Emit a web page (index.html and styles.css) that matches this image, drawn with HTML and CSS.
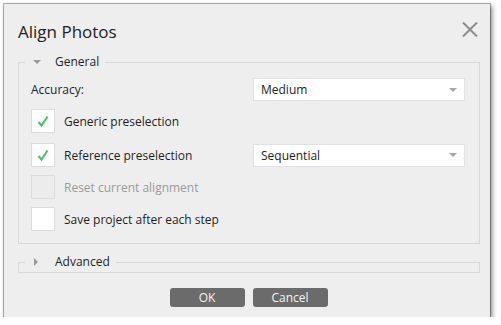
FILE: index.html
```html
<!DOCTYPE html>
<html lang="en">

<head>
  <meta charset="UTF-8" />
  <title>Align Photos</title>
  <link rel="stylesheet" href="styles.css">
</head>

<body>
  <div class="dialog">
    <div class="titlebar">
      <span class="title">Align Photos</span>
      <svg class="close" width="16" height="15" viewBox="0 0 16 15">
        <path d="M1 0.5 L15 14.5 M15 0.5 L1 14.5" stroke="#8c8c8c" stroke-width="2" fill="none" />
      </svg>
    </div>

    <fieldset class="group">
      <legend><span class="arrow-down"></span>General</legend>

      <div class="row row-accuracy">
        <span class="label">Accuracy:</span>
        <div class="combo"><span>Medium</span><span class="combo-arrow"></span></div>
      </div>

      <div class="row row-check gap1">
        <span class="check checked">
          <svg width="14" height="14" viewBox="0 0 14 14"><path d="M2.5 8 L5.5 11.5 L11.5 2.5" stroke="#3fc56a" stroke-width="2" fill="none" /></svg>
        </span>
        <span class="label">Generic preselection</span>
      </div>

      <div class="row row-check gap2">
        <span class="check checked">
          <svg width="14" height="14" viewBox="0 0 14 14"><path d="M2.5 8 L5.5 11.5 L11.5 2.5" stroke="#3fc56a" stroke-width="2" fill="none" /></svg>
        </span>
        <span class="label wide">Reference preselection</span>
        <div class="combo"><span>Sequential</span><span class="combo-arrow"></span></div>
      </div>

      <div class="row row-check gap3">
        <span class="check disabled"></span>
        <span class="label muted">Reset current alignment</span>
      </div>

      <div class="row row-check gap3">
        <span class="check"></span>
        <span class="label">Save project after each step</span>
      </div>
    </fieldset>

    <fieldset class="group collapsed">
      <legend><span class="arrow-right"></span>Advanced</legend>
    </fieldset>

    <div class="buttons">
      <button>OK</button>
      <button>Cancel</button>
    </div>
  </div>
</body>

</html>
```

FILE: styles.css
```css
body {
  margin: 0;
  background: #ffffff;
  font-family: 'Open Sans', sans-serif;
  color: #1e1e1e;
}

.dialog {
  margin: 4px 0 0 4px;
  width: 486px;
  height: 313px;
  background: #eeeeee;
  box-shadow: 0 0 0 1px rgba(0, 0, 0, 0.3), 2px 2px 5px rgba(0, 0, 0, 0.5);
  box-sizing: border-box;
}

.titlebar {
  height: 50px;
  display: flex;
  align-items: center;
  justify-content: space-between;
  padding: 4px 12px 0 14px;
  box-sizing: border-box;
}

.title {
  font-size: 17px;
  color: #222;
}

.close {
  margin-top: -3px;
}

.group {
  margin: 0 10px 0 14px;
  padding: 8px 14px 12px 12px;
  border: 1px solid #d8d8d8;
  min-width: 0;
}

.group legend {
  margin-left: -6px;
  padding: 0 6px 0 8px;
  font-size: 12px;
  line-height: 16px;
  display: flex;
  align-items: center;
}

.arrow-down {
  width: 0;
  height: 0;
  border-left: 4px solid transparent;
  border-right: 4px solid transparent;
  border-top: 4px solid #9a9a9a;
  margin-right: 14px;
}

.arrow-right {
  width: 0;
  height: 0;
  border-top: 4px solid transparent;
  border-bottom: 4px solid transparent;
  border-left: 4px solid #9a9a9a;
  margin-left: 1px;
  margin-right: 17px;
}

.collapsed {
  margin-top: 10px;
  padding: 0 14px 2px 12px;
}

.row {
  display: flex;
  align-items: center;
  font-size: 12px;
}

.row-accuracy {
  height: 23px;
  justify-content: space-between;
}

.row-check {
  height: 24px;
}

.gap1 {
  margin-top: 8px;
}

.gap2 {
  margin-top: 10px;
}

.gap3 {
  margin-top: 8px;
}

.label.wide {
  flex: 1;
}

.muted {
  color: #9a9a9a;
}

.check {
  width: 22px;
  height: 22px;
  border: 1px solid #dcdcdc;
  background: #ffffff;
  margin-right: 9px;
  display: flex;
  align-items: center;
  justify-content: center;
}

.check.disabled {
  background: #ececec;
}

.combo {
  width: 212px;
  height: 23px;
  box-sizing: border-box;
  background: #ffffff;
  border: 1px solid #e2e2e2;
  display: flex;
  align-items: center;
  justify-content: space-between;
  padding: 0 7px 0 7px;
  font-size: 12px;
}

.combo-arrow {
  width: 0;
  height: 0;
  border-left: 4px solid transparent;
  border-right: 4px solid transparent;
  border-top: 4px solid #a8a8a8;
}

.buttons {
  display: flex;
  justify-content: center;
  gap: 8px;
  margin-top: 15px;
  padding-left: 3px;
}

button {
  width: 75px;
  height: 19px;
  padding: 0;
  border: none;
  border-radius: 3px;
  background: #6b6b6b;
  color: #f4f4f4;
  font-family: 'Open Sans', sans-serif;
  font-size: 12px;
}
```
